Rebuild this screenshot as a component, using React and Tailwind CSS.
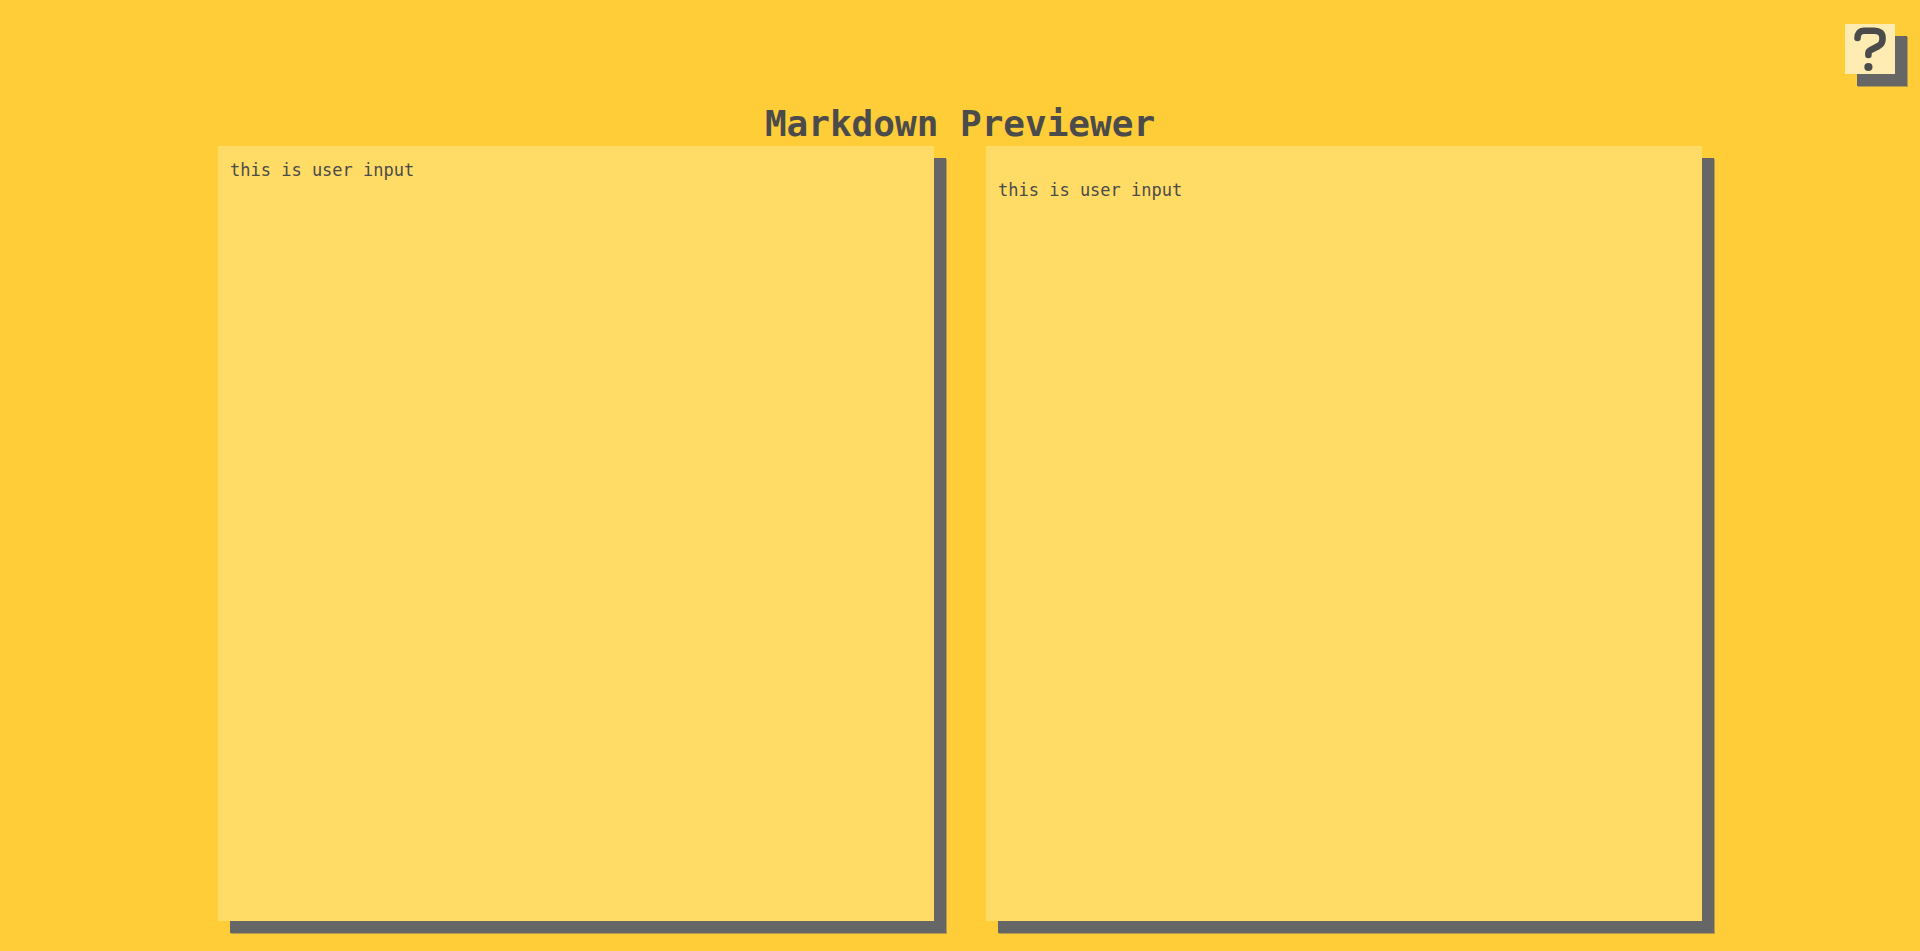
import { useState } from "react";

export default function App() {
  const [text, setText] = useState("this is user input");
  return (
    <div className="flex min-h-screen flex-col bg-[#ffcd38] font-['DejaVu_Sans_Mono',monospace] text-[#4b4b4b]">
      <header className="flex justify-end pt-6 pr-[25px]">
        <button
          type="button"
          aria-label="Help"
          className="size-[50px] bg-[#ffecb3] shadow-[12px_12px_0_#666666,13px_13px_0_#b29a4f]"
        >
          <svg viewBox="0 0 50 50" className="size-full" fill="none" aria-hidden="true">
            <path
              d="M12.5 14 C12.5 9.5 15 6.7 19 6.7 H29.5 C34.5 6.7 37.5 9.5 37.5 13.5 V15.5 C37.5 18.5 36 20.5 33.5 22 L25.5 26.2 C24 27 23.4 27.8 23.4 29.5 V31"
              stroke="currentColor"
              strokeWidth="6.6"
              strokeLinecap="round"
            />
            <circle cx="23.4" cy="43" r="4.1" fill="currentColor" />
          </svg>
        </button>
      </header>
      <h1 className="mt-[27px] text-center text-[36px] leading-[45px] font-bold">Markdown Previewer</h1>
      <main className="mx-auto mb-[30px] grid w-full max-w-[1484px] flex-1 grid-cols-2 gap-[52px]">
        <textarea
          aria-label="Markdown input"
          value={text}
          onChange={(e) => setText(e.target.value)}
          className="resize-none bg-[#ffdc66] p-3 text-[17px] leading-[24px] shadow-[12px_12px_0_#666666,13px_13px_0_#b29a4f] outline-none"
        />
        <section
          aria-label="Preview"
          className="bg-[#ffdc66] p-3 text-[17px] leading-[24px] shadow-[12px_12px_0_#666666,13px_13px_0_#b29a4f]"
        >
          <p className="mt-5 whitespace-pre-wrap">{text}</p>
        </section>
      </main>
    </div>
  );
}
